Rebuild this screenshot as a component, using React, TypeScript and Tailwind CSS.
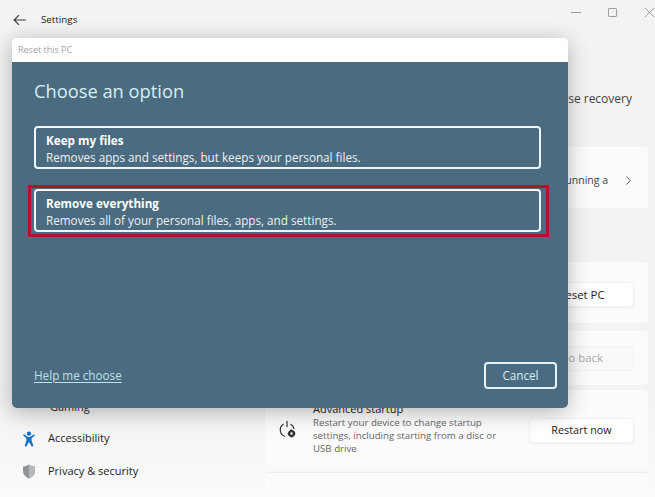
import { ChevronRight } from "lucide-react";

function ArrowBack() {
    return (
        <svg width="14" height="12" viewBox="0 0 14 12" fill="none" stroke="#3c3c3c" strokeWidth="1.2">
            <path d="M13 6H1.5M6 1.2 1.2 6 6 10.8" />
        </svg>
    );
}

function WindowControls() {
    return (
        <div className="flex items-center gap-[27px] mb-[14px]">
            <div className="w-[10px] h-px bg-[#9a9a9a]" />
            <div className="w-[9px] h-[9px] border border-[#a0a0a0] rounded-[1px]" />
            <svg width="11" height="11" viewBox="0 0 11 11" stroke="#a0a0a0" strokeWidth="1">
                <path d="M1 1l9 9M10 1l-9 9" />
            </svg>
        </div>
    );
}

function AccessibilityIcon() {
    return (
        <svg width="14" height="16" viewBox="0 0 14 16" fill="#1273c4">
            <circle cx="7" cy="2.6" r="2.2" />
            <path d="M1 4.2 2 3.2 6 6h2l4-2.8 1 1-3.4 3v2.6L11.4 15l-1.6.8L7 11l-2.8 4.8L2.600 15l1.800-5.200V7.200z" />
        </svg>
    );
}

function ShieldIcon() {
    return (
        <svg width="14" height="15" viewBox="0 0 14 15">
            <path d="M7 .6c1.800 1.300 3.800 1.900 6 2v5c0 3.200-2.400 5.500-6 6.800C3.400 13.100 1 10.800 1 7.600v-5c2.200-.1 4.200-.7 6-2z" fill="#8f9497" />
            <path d="M7 .6c1.800 1.300 3.800 1.900 6 2v5c0 3.200-2.400 5.500-6 6.800z" fill="#b5b9bb" />
        </svg>
    );
}

function StartupIcon() {
    return (
        <svg width="18" height="20" viewBox="0 0 18 20" fill="none" stroke="#333" strokeWidth="1.2">
            <path d="M8 1v6" />
            <path d="M4.500 4A7 7 0 0 0 6 16.500" />
            <path d="M11.500 4a7 7 0 0 1 3.500 5" />
            <circle cx="12.500" cy="13.500" r="2.400" strokeWidth="2.400" />
            <path d="M12.500 9.500v1.500M12.500 16v1.500M8.700 13.500h1.500M14.800 13.500h1.500" strokeWidth="1.600" />
        </svg>
    );
}

function OptionButton({ title, text }: { title: string; text: string }) {
    return (
        <div className="h-[43px] border-2 border-[#eef6f8] rounded-[4px] pl-[10px] pt-[2px] flex flex-col justify-center text-[#eaf2f5]">
            <div className="text-[11.700px] leading-[17px] font-bold text-white">{title}</div>
            <div className="text-[11.700px] leading-[17px]">{text}</div>
        </div>
    );
}

export default function App() {
    return (
        <div className="relative w-[655px] h-[497px] overflow-hidden bg-[#f3f3f3] font-['Open_Sans',sans-serif] text-[#1b1b1b]">
            {/* settings window behind the dialog */}
            <div className="flex items-center justify-between h-[38px] pl-[13px]">
                <div className="flex items-center gap-[14px] text-[9.800px] pt-[2px]">
                    <ArrowBack />
                    <span>Settings</span>
                </div>
                <WindowControls />
            </div>

            <div className="flex h-[459px] bg-gradient-to-b from-[#f3f3f3] from-[80%] to-[#fbfbfb]">
                <div className="w-[265px] shrink-0 pl-[22px] pt-[358px] text-[11px] text-[#222]">
                    <div className="flex items-center gap-[14px] h-[22px] pl-[1px]">
                        <span className="w-[13px]" />
                        <span>Gaming</span>
                    </div>
                    <div className="flex items-center gap-[12px] h-[33px] mt-[4px]">
                        <AccessibilityIcon />
                        <span>Accessibility</span>
                    </div>
                    <div className="flex items-center gap-[12px] h-[33px]">
                        <ShieldIcon />
                        <span>Privacy &amp; security</span>
                    </div>
                </div>

                <div className="flex-1 min-w-0 pr-[7px]">
                    <div className="h-[109px] pt-[52px] pr-[16px] text-right text-[12px] text-[#444] whitespace-nowrap">
                        these recovery
                    </div>
                    <div className="h-[61px] pt-[6px] bg-[#fbfbfb] rounded-[4px] flex items-center justify-end gap-[13px] pr-[12px] text-[10.500px] text-[#444]">
                        <span>running a</span>
                        <ChevronRight size={15} strokeWidth={1.300} className="text-[#333]" />
                    </div>
                    <div className="h-[54px]" />
                    <div className="h-[61px] pt-[4px] bg-[#fbfbfb] rounded-[4px] flex items-center justify-end pr-[14px]">
                        <div className="w-[105px] h-[25px] bg-white rounded-[4px] border border-[#f2f2f2] flex items-center justify-center text-[11.400px] shadow-xs">
                            Reset PC
                        </div>
                    </div>
                    <div className="h-[54px] mt-[8px] bg-[#fbfbfb] rounded-[4px] flex items-center justify-end pr-[14px]">
                        <div className="w-[105px] h-[25px] bg-[#f9f9f9] rounded-[4px] border border-[#f3f3f3] flex items-center justify-center text-[11.400px] text-[#a8a8a8]">
                            Go back
                        </div>
                    </div>
                    <div className="h-[77px] mt-[5px] bg-[#fbfbfb] rounded-[4px] flex items-center pl-[14px] pr-[14px] pt-[3px]">
                        <StartupIcon />
                        <div className="w-[196px] ml-[16px] text-[9.700px] leading-[13px] text-[#666] -mt-[5px]">
                            <div className="text-[11px] leading-[15px] text-[#222]">Advanced startup</div>
                            <div>Restart your device to change startup settings, including starting from a disc or USB drive</div>
                        </div>
                        <div className="ml-auto w-[105px] h-[25px] bg-white rounded-[4px] border border-[#f2f2f2] flex items-center justify-center text-[10.800px] shadow-xs">
                            Restart now
                        </div>
                    </div>
                    <div className="h-[20px] mt-[5px] bg-[#fbfbfb] rounded-t-[4px] border-t border-[#ededed]" />
                </div>
            </div>

            {/* reset dialog */}
            <div className="absolute left-[12px] top-[38px] w-[556px] h-[370px] rounded-[5px] overflow-hidden flex flex-col shadow-[0_4px_22px_rgba(0,0,0,0.28)]">
                <div className="h-[24px] shrink-0 bg-white pl-[6px] flex items-center text-[9px] text-[#a3a3a3]">
                    Reset this PC
                </div>
                <div className="flex-1 bg-[#4a6b80] pl-[22px] pr-[27px] flex flex-col">
                    <div className="mt-[15px] text-[18.300px] leading-[27px] text-[#d9eef4]">Choose an option</div>
                    <div className="mt-[22px]">
                        <OptionButton title="Keep my files" text="Removes apps and settings, but keeps your personal files." />
                    </div>
                    <div className="mt-[20px] relative">
                        <OptionButton title="Remove everything" text="Removes all of your personal files, apps, and settings." />
                        <div className="absolute -left-[6px] -right-[8px] -top-[4px] -bottom-[5px] border-[3px] border-[#b5122a]" />
                    </div>
                    <div className="mt-auto mb-[19px] flex items-center justify-between">
                        <span className="text-[11.700px] text-[#bfe0ec] underline underline-offset-2">Help me choose</span>
                        <div className="w-[73px] h-[27px] -mr-[16px] border-2 border-[#e6f3f7] rounded-[4px] flex items-center justify-center text-[11.700px] text-[#d9eef4]">
                            Cancel
                        </div>
                    </div>
                </div>
            </div>
        </div>
    );
}
